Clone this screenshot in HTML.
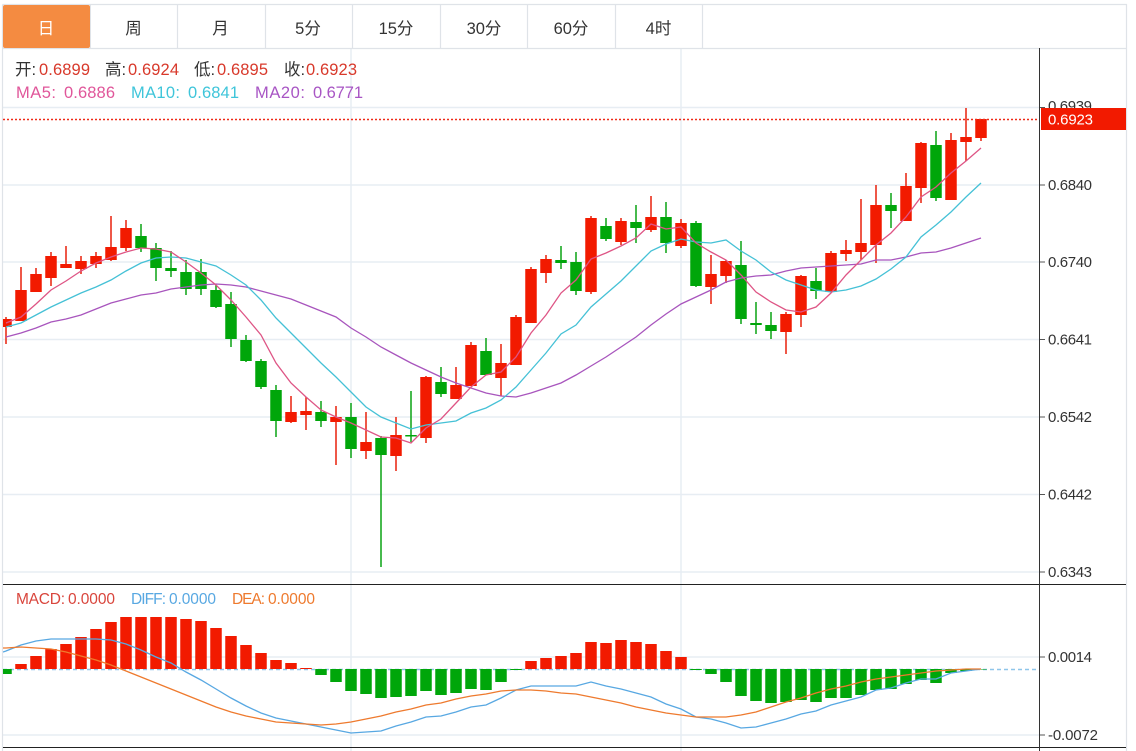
<!DOCTYPE html>
<html lang="zh"><head><meta charset="utf-8"><title>K线</title>
<style>
html,body{margin:0;padding:0;background:#fff;width:1136px;height:751px;overflow:hidden}
svg{display:block;position:absolute;left:0;top:0;filter:blur(.3px)}
text{font-family:"Liberation Sans","Noto Sans CJK SC",sans-serif}
.t{font-size:16.500px;fill:#333;text-anchor:middle}
.a{font-size:15px;fill:#333}
.o{font-size:16.500px;fill:#333}
.v{font-size:16.500px;fill:#d8392b}
</style></head><body>
<svg width="1136" height="751" viewBox="0 0 1136 751" xmlns="http://www.w3.org/2000/svg">
<defs><clipPath id="c"><rect x="3" y="49" width="1036" height="702"/></clipPath></defs>
<!-- grid -->
<g stroke="#e7edf3" stroke-width="1.5" fill="none">
<path d="M3 107.500H1039M3 185H1039M3 262H1039M3 339.500H1039M3 417H1039M3 494.500H1039M3 572H1039M3 657H1039M3 735H1039"/>
<path d="M351 49V751M681 49V751"/>
</g>
<!-- frame -->
<g stroke="#dfe3e8" stroke-width="1.2" fill="none">
<path d="M2.500 4.500H1126.500V751M2.500 4.500V751M3 48.500H1126"/>
<path d="M177.500 5V48M265.500 5V48M352.500 5V48M440.500 5V48M527.500 5V48M615.500 5V48M702.500 5V48"/>
</g>
<rect x="3" y="5" width="87" height="43" rx="2" fill="#f48b41"/>
<path d="M90.500 5V48" stroke="#dfe3e8"/>
<text x="46" y="34" class="t" style="fill:#fff">日</text>
<text x="133.500" y="34" class="t">周</text>
<text x="220.500" y="34" class="t">月</text>
<text x="308" y="34" class="t">5分</text>
<text x="396" y="34" class="t">15分</text>
<text x="484" y="34" class="t">30分</text>
<text x="571" y="34" class="t">60分</text>
<text x="658.500" y="34" class="t">4时</text>

<!-- legend -->
<text x="15" y="75" class="o">开:</text><text x="39" y="75" class="v" textLength="51">0.6899</text>
<text x="105" y="75" class="o">高:</text><text x="128" y="75" class="v" textLength="51">0.6924</text>
<text x="194" y="75" class="o">低:</text><text x="217" y="75" class="v" textLength="51">0.6895</text>
<text x="284" y="75" class="o">收:</text><text x="306" y="75" class="v" textLength="51">0.6923</text>
<g font-size="16.500">
<text x="16" y="98" fill="#e0569a" textLength="40">MA5:</text><text x="64" y="98" fill="#e0569a" textLength="51">0.6886</text>
<text x="131" y="98" fill="#3fc5da" textLength="49">MA10:</text><text x="188" y="98" fill="#3fc5da" textLength="51">0.6841</text>
<text x="255" y="98" fill="#a855c4" textLength="50">MA20:</text><text x="313" y="98" fill="#a855c4" textLength="50">0.6771</text>
</g>
<g font-size="15.500">
<text x="16" y="604" fill="#d9453c" textLength="49">MACD:</text><text x="68" y="604" fill="#d9453c" textLength="47">0.0000</text>
<text x="131" y="604" fill="#58a8e2" textLength="35">DIFF:</text><text x="169" y="604" fill="#58a8e2" textLength="47">0.0000</text>
<text x="232" y="604" fill="#ee7a2e" textLength="33">DEA:</text><text x="268" y="604" fill="#ee7a2e" textLength="47">0.0000</text>
</g>

<g clip-path="url(#c)" fill="none">
<!-- red wicks -->
<path stroke="#e8200c" stroke-width="1.500" d="M6 317V344M21 267V321M36 268V292M51 252V286M66 246V268M81 256V274M96 252V268M111 216V261M126 220V251M291 396V423M306 397V430M336 406V465M366 412V459M396 417V471M426 376V443M456 367V399M471 342V386M501 344V396M516 315V365M531 267V323M546 255V283M591 216V294M621 218V245M651 196V232M681 219V248M711 255V304M726 260V283M786 312V354M801 275V327M831 251V292M846 240V261M861 199V260M876 185V263M906 173V221M921 142V203M951 133V200M966 108V161M981 119V141"/>
<!-- green wicks -->
<path stroke="#0aa414" stroke-width="1.500" d="M141 224V252M156 243V281M171 251V277M186 260V295M201 259V295M216 285V308M231 292V347M246 335V362M261 359V389M276 385V437M321 401V427M351 403V458M381 436V567M411 391V442M441 367V397M486 338V375M561 246V269M576 252V295M606 218V241M636 205V243M666 202V253M696 221V287M741 241V324M756 302V334M771 312V339M816 268V299M891 193V228M936 131V201"/>
<!-- red bodies -->
<path stroke="#f21a00" stroke-width="11.500" d="M6 319V327M21 290V321M36 274V292M51 256V278M66 264V268M81 261V269M96 256V264M111 247V260M126 228V248M291 412V422M306 411V415M336 417V422M366 442V451M396 435V456M426 377V438M456 385V399M471 345V386M501 363V378M516 317V365M531 269V323M546 259V273M591 218V292M621 221V242M651 217V230M681 223V246M711 274V287M726 261V276M786 314V332M801 276V315M831 253V292M846 250V254M861 243V252M876 205V245M906 186V221M921 143V188M951 140V200M966 137V142M981 119V138"/>
<!-- green bodies -->
<path stroke="#00a60a" stroke-width="11.500" d="M141 236V248M156 248V268M171 268V271M186 272V289M201 272V289M216 290V307M231 304V339M246 340V361M261 361V387M276 390V421M321 412V421M351 417V449M381 438V455M411 435V436.500M441 382V394M486 351V375M561 260V263M576 262V291M606 226V239M636 222V228M666 217V243M696 223V286M741 265V319M756 323V325M771 325V331M816 281V291M891 205V211M936 145V198"/>
<!-- MAs -->
<polyline stroke="#a855bd" stroke-width="1.300" points="6,337 21,333 36,328 51,322 66,319 81,315 96,309 111,303 126,299 141,295 156,293 171,289 186,287 201,285 216,284 231,285 246,287 261,291 276,295 291,299 306,305 321,311 336,317 351,328 366,337 381,347 396,355 411,363 426,370 441,377 456,383 471,388 486,393 501,396 516,397 531,393 546,388 561,383 576,375 591,366 606,357 621,347 636,337 651,325 666,314 681,304 696,297 711,290 726,282 741,278 756,276 771,275 786,271 801,268 816,267 831,266 846,265 861,264 876,260 891,260 906,257 921,253 936,252 951,248 966,243 981,238"/>
<polyline stroke="#45c1d6" stroke-width="1.300" points="6,327 21,323 36,315 51,307 66,300 81,293 96,287 111,280 126,271 141,263 156,258 171,257 186,258 201,262 216,266 231,275 246,285 261,300 276,318 291,333 306,348 321,363 336,377 351,392 366,407 381,417 396,423 411,429 426,425 441,423 456,421 471,413 486,408 501,400 516,387 531,370 546,353 561,334 576,325 591,307 606,294 621,281 636,266 651,251 666,244 681,239 696,242 711,243 726,240 741,251 756,260 771,272 786,280 801,285 816,290 831,292 846,290 861,286 876,279 891,269 906,257 921,237 936,225 951,212 966,197 981,183"/>
<polyline stroke="#de5585" stroke-width="1.300" points="6,323 21,317 36,304 51,290 66,281 81,271 96,263 111,257 126,252 141,248 156,249 171,252 186,262 201,273 216,285 231,300 246,317 261,335 276,363 291,383 306,397 321,410 336,417 351,423 366,430 381,437 396,438 411,443 426,428 441,419 456,403 471,387 486,375 501,372 516,357 531,333 546,315 561,293 576,280 591,259 606,253 621,246 636,238 651,224 666,229 681,227 696,243 711,252 726,260 741,275 756,292 771,302 786,310 801,312 816,307 831,293 846,275 861,260 876,245 891,233 906,217 921,197 936,187 951,173 966,161 981,148"/>

<!-- MACD bars -->
<path stroke="#8fc6ea" stroke-width="1.400" stroke-dasharray="4 3" d="M3 669.500H1036"/>
<path stroke="#f21a00" stroke-width="11.500" d="M21 664V669M36 656V669M51 649V669M66 644V669M81 637V669M96 629V669M111 622V669M126 617V669M141 617V669M156 617V669M171 617V669M186 619V669M201 621V669M216 628V669M231 636V669M246 645V669M261 653V669M276 660V669M291 663V669M306 668V669M531 661V669M546 658V669M561 656V669M576 653V669M591 642V669M606 643V669M621 640V669M636 642V669M651 644V669M666 651V669M681 657V669"/>
<path stroke="#00a60a" stroke-width="11.500" d="M6 669V674M321 669V675M336 669V682M351 669V691M366 669V694M381 669V698M396 669V697M411 669V696M426 669V691M441 669V695M456 669V693M471 669V689M486 669V690M501 669V682M516 669V670M696 669V670M711 669V674M726 669V682M741 669V696M756 669V701M771 669V703M786 669V702M801 669V700M816 669V702M831 669V698M846 669V698M861 669V695M876 669V690M891 669V689M906 669V684M921 669V680M936 669V683M951 669V673M966 669V671M981 669V669.500"/>
<polyline stroke="#58a8e2" stroke-width="1.300" points="3,652 6,651 21,645 36,641 51,639 66,639 81,639 96,639 111,640 126,644 141,650 156,657 171,663 186,672 201,680 216,689 231,698 246,706 261,713 276,718 291,721 306,724 321,727 336,730 351,733 366,732 381,731 396,726 411,722 426,717 441,716 456,712 471,707 486,705 501,698 516,690 531,686 546,686 561,686 576,686 591,682 606,686 621,689 636,693 651,697 666,704 681,709 696,717 711,719 726,723 741,728 756,727 771,723 786,719 801,714 816,711 831,705 846,701 861,697 876,690 891,688 906,683 921,679 936,679 951,673 966,671 981,669"/>
<polyline stroke="#ee7a2e" stroke-width="1.300" points="3,648 6,648 21,647 36,648 51,649 66,652 81,656 96,660 111,665 126,671 141,677 156,683 171,689 186,695 201,701 216,707 231,712 246,716 261,719 276,722 291,723 306,724 321,725 336,724 351,722 366,719 381,716 396,712 411,709 426,705 441,703 456,699 471,696 486,694 501,691 516,690 531,690 546,691 561,693 576,694 591,697 606,700 621,703 636,707 651,710 666,713 681,715 696,717 711,717 726,717 741,715 756,712 771,707 786,702 801,698 816,693 831,689 846,686 861,682 876,679 891,677 906,675 921,673 936,671 951,670 966,669 981,669"/>
</g>
<!-- red price line -->
<path stroke="#f02a18" stroke-width="1.500" stroke-dasharray="2 2" d="M3 119.500H1040" fill="none"/>

<!-- dark lines -->
<path d="M3 584.500H1126M3 747.500H1126" stroke="#222" stroke-width="1" fill="none"/>
<path d="M1039.500 48V751" stroke="#333" stroke-width="1" fill="none"/>
<path d="M1040 107.500h5M1040 185h5M1040 262h5M1040 339.500h5M1040 417h5M1040 494.500h5M1040 572h5M1040 657h5M1040 735h5" stroke="#555" stroke-width="1" fill="none"/>

<!-- axis labels -->
<text x="1048" y="111" class="a" textLength="44">0.6939</text>
<rect x="1041" y="108" width="85" height="22" fill="#f21a00"/>
<text x="1048" y="124.500" class="a" style="fill:#fff" textLength="45">0.6923</text>
<text x="1048" y="190" class="a" textLength="44">0.6840</text>
<text x="1048" y="267" class="a" textLength="44">0.6740</text>
<text x="1048" y="344.500" class="a" textLength="44">0.6641</text>
<text x="1048" y="422" class="a" textLength="44">0.6542</text>
<text x="1048" y="499.500" class="a" textLength="44">0.6442</text>
<text x="1048" y="577" class="a" textLength="44">0.6343</text>
<text x="1048" y="662" class="a" textLength="44">0.0014</text>
<text x="1048" y="740" class="a" textLength="50">-0.0072</text>
</svg>
</body></html>
